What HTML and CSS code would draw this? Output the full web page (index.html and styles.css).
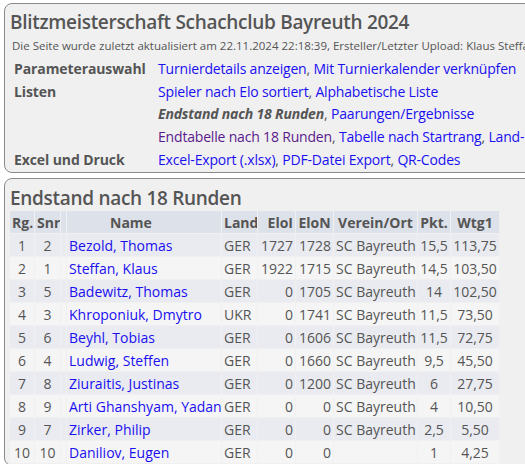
FILE: index.html
```html
<!DOCTYPE html>
<html lang="de">
<head>
<meta charset="utf-8">
<title>Blitzmeisterschaft Schachclub Bayreuth 2024</title>
<link rel="stylesheet" href="styles.css">
</head>
<body>
<div class="page">
  <div class="box">
    <h1 class="title">Blitzmeisterschaft Schachclub Bayreuth 2024</h1>
    <div class="stamp">Die Seite wurde zuletzt aktualisiert am 22.11.2024 22:18:39, Ersteller/Letzter Upload: Klaus Steffan</div>
    <table class="menu">
      <tr><th>Parameterauswahl</th><td><a href="#">Turnierdetails anzeigen</a>, <a href="#">Mit Turnierkalender verknüpfen</a></td></tr>
      <tr><th>Listen</th><td><a href="#">Spieler nach Elo sortiert</a>, <a href="#">Alphabetische Liste</a></td></tr>
      <tr><th></th><td><span class="current">Endstand nach 18 Runden</span>, <a href="#">Paarungen/Ergebnisse</a></td></tr>
      <tr><th></th><td><a href="#" class="visited">Endtabelle nach 18 Runden</a>, <a href="#">Tabelle nach Startrang</a>, <a href="#">Land-Statistik</a></td></tr>
      <tr><th>Excel und Druck</th><td><a href="#">Excel-Export (.xlsx)</a>, <a href="#">PDF-Datei Export</a>, <a href="#">QR-Codes</a></td></tr>
    </table>
  </div>
  <div class="box box2">
    <h2 class="title">Endstand nach 18 Runden</h2>
    <table class="standings">
      <colgroup>
        <col class="c-rg"><col class="c-snr"><col class="c-blank"><col class="c-name"><col class="c-land"><col class="c-elo"><col class="c-elo"><col class="c-club"><col class="c-pkt"><col class="c-wtg">
      </colgroup>
      <thead>
        <tr><th>Rg.</th><th>Snr</th><th></th><th class="h-name">Name</th><th>Land</th><th class="num">EloI</th><th>EloN</th><th>Verein/Ort</th><th>Pkt.</th><th>Wtg1</th></tr>
      </thead>
      <tbody>
        <tr><td class="ctr">1</td><td class="ctr">2</td><td></td><td><a href="#">Bezold, Thomas</a></td><td>GER</td><td class="num">1727</td><td class="num">1728</td><td>SC Bayreuth</td><td class="ctr">15,5</td><td class="ctr">113,75</td></tr>
        <tr><td class="ctr">2</td><td class="ctr">1</td><td></td><td><a href="#">Steffan, Klaus</a></td><td>GER</td><td class="num">1922</td><td class="num">1715</td><td>SC Bayreuth</td><td class="ctr">14,5</td><td class="ctr">103,50</td></tr>
        <tr><td class="ctr">3</td><td class="ctr">5</td><td></td><td><a href="#">Badewitz, Thomas</a></td><td>GER</td><td class="num">0</td><td class="num">1705</td><td>SC Bayreuth</td><td class="ctr">14</td><td class="ctr">102,50</td></tr>
        <tr><td class="ctr">4</td><td class="ctr">3</td><td></td><td><a href="#">Khroponiuk, Dmytro</a></td><td>UKR</td><td class="num">0</td><td class="num">1741</td><td>SC Bayreuth</td><td class="ctr">11,5</td><td class="ctr">73,50</td></tr>
        <tr><td class="ctr">5</td><td class="ctr">6</td><td></td><td><a href="#">Beyhl, Tobias</a></td><td>GER</td><td class="num">0</td><td class="num">1606</td><td>SC Bayreuth</td><td class="ctr">11,5</td><td class="ctr">72,75</td></tr>
        <tr><td class="ctr">6</td><td class="ctr">4</td><td></td><td><a href="#">Ludwig, Steffen</a></td><td>GER</td><td class="num">0</td><td class="num">1660</td><td>SC Bayreuth</td><td class="ctr">9,5</td><td class="ctr">45,50</td></tr>
        <tr><td class="ctr">7</td><td class="ctr">8</td><td></td><td><a href="#">Ziuraitis, Justinas</a></td><td>GER</td><td class="num">0</td><td class="num">1200</td><td>SC Bayreuth</td><td class="ctr">6</td><td class="ctr">27,75</td></tr>
        <tr><td class="ctr">8</td><td class="ctr">9</td><td></td><td><a href="#">Arti Ghanshyam, Yadan</a></td><td>GER</td><td class="num">0</td><td class="num">0</td><td>SC Bayreuth</td><td class="ctr">4</td><td class="ctr">10,50</td></tr>
        <tr><td class="ctr">9</td><td class="ctr">7</td><td></td><td><a href="#">Zirker, Philip</a></td><td>GER</td><td class="num">0</td><td class="num">0</td><td>SC Bayreuth</td><td class="ctr">2,5</td><td class="ctr">5,50</td></tr>
        <tr><td class="ctr">10</td><td class="ctr">10</td><td></td><td><a href="#">Daniliov, Eugen</a></td><td>GER</td><td class="num">0</td><td class="num">0</td><td></td><td class="ctr">1</td><td class="ctr">4,25</td></tr>
      </tbody>
    </table>
  </div>
</div>
</body>
</html>
```

FILE: styles.css
```css
html, body {
  margin: 0;
  padding: 0;
  background: #ffffff;
}
body {
  padding: 3px 0 0 4px;
  font-family: "Open Sans", "Noto Sans", sans-serif;
  font-size: 14px;
  color: #555555;
}
.page {
  width: max-content;
}
.box {
  border: 1px solid #8a8a8a;
  border-radius: 8px;
  background: #f0f0f0;
  padding: 6px 20px 1px 4px;
}
.box2 {
  margin-top: 5px;
}
.title {
  margin: 0;
  font-size: 19px;
  line-height: 24px;
  font-weight: 600;
  letter-spacing: -0.3px;
  color: #555555;
  padding-left: 1px;
}
.box2 .title {
  padding-top: 1px;
}
.stamp {
  margin-top: 4px;
  padding-left: 3px;
  font-size: 11.5px;
  line-height: 16px;
}
a {
  color: #1a0ff0;
  text-decoration: none;
}
a.visited {
  color: #5a1a8b;
}
.menu {
  margin-top: 3px;
  border-collapse: collapse;
  white-space: nowrap;
}
.menu th, .menu td {
  height: 22.75px;
  padding: 0;
  vertical-align: middle;
}
.menu td {
  letter-spacing: -0.18px;
}
.menu th {
  text-align: left;
  padding-left: 5px;
  width: 144px;
  font-weight: 700;
  letter-spacing: -0.1px;
}
.current {
  font-weight: 700;
  font-style: italic;
}
.standings {
  margin-top: 0;
  border-collapse: separate;
  border-spacing: 1px;
  table-layout: fixed;
  width: 491px;
  white-space: nowrap;
}
.c-rg { width: 24px; }
.c-snr { width: 25px; }
.c-blank { width: 5px; }
.c-name { width: 154px; }
.c-land { width: 35px; }
.c-elo { width: 37px; }
.c-club { width: 83px; }
.c-pkt { width: 32px; }
.c-wtg { width: 48px; }
.standings th, .standings td {
  height: 20px;
  line-height: 19px;
  padding: 2px 2px 0;
  vertical-align: middle;
  overflow: hidden;
}
.standings th {
  background: #dde1e9;
  font-weight: 700;
  text-align: center;
}
.standings th.h-name {
  text-align: left;
  padding-left: 43px;
}
.standings th.num {
  text-align: right;
}
.standings td {
  text-align: left;
}
.standings tbody tr:nth-child(odd) td {
  background: #e9ebf0;
}
.standings tbody tr:nth-child(even) td {
  background: #f5f5f5;
}
.standings td.num {
  text-align: right;
}
.standings td.ctr {
  text-align: center;
}
```
